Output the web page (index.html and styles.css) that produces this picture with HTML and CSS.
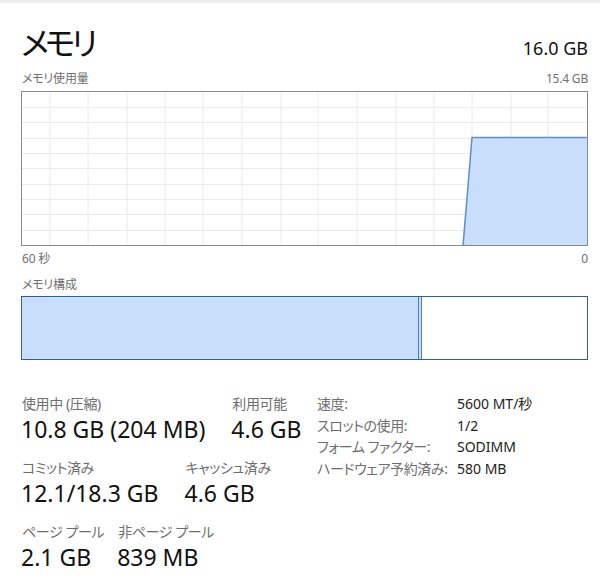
FILE: index.html
```html
<!DOCTYPE html>
<html lang="ja">
<head>
    <meta charset="UTF-8">
    <meta name="viewport" content="width=device-width, initial-scale=1.0">
    <title>メモリ</title>
    <link rel="stylesheet" href="styles.css">
</head>
<body>
    <main class="panel">
        <header class="head">
            <h1 class="title">メモリ</h1>
            <span class="total">16.0 GB</span>
        </header>

        <div class="caption">
            <span>メモリ使用量</span>
            <span>15.4 GB</span>
        </div>
        <div class="chart">
            <svg width="565" height="153" viewBox="0 0 565 153">
                <g class="grid">
                    <line x1="28" y1="0" x2="28" y2="153"/>
                    <line x1="66" y1="0" x2="66" y2="153"/>
                    <line x1="105" y1="0" x2="105" y2="153"/>
                    <line x1="143" y1="0" x2="143" y2="153"/>
                    <line x1="181" y1="0" x2="181" y2="153"/>
                    <line x1="220" y1="0" x2="220" y2="153"/>
                    <line x1="259" y1="0" x2="259" y2="153"/>
                    <line x1="296" y1="0" x2="296" y2="153"/>
                    <line x1="335" y1="0" x2="335" y2="153"/>
                    <line x1="374" y1="0" x2="374" y2="153"/>
                    <line x1="412" y1="0" x2="412" y2="153"/>
                    <line x1="450" y1="0" x2="450" y2="153"/>
                    <line x1="489" y1="0" x2="489" y2="153"/>
                    <line x1="526" y1="0" x2="526" y2="153"/>
                    <line x1="0" y1="15.5" x2="565" y2="15.5"/>
                    <line x1="0" y1="30.5" x2="565" y2="30.5"/>
                    <line x1="0" y1="46.5" x2="565" y2="46.5"/>
                    <line x1="0" y1="61.5" x2="565" y2="61.5"/>
                    <line x1="0" y1="76.5" x2="565" y2="76.5"/>
                    <line x1="0" y1="92.5" x2="565" y2="92.5"/>
                    <line x1="0" y1="107.5" x2="565" y2="107.5"/>
                    <line x1="0" y1="122.5" x2="565" y2="122.5"/>
                    <line x1="0" y1="138.5" x2="565" y2="138.5"/>
                </g>
                <polygon class="usage" points="441,154 450,45.5 566,45.5 566,154"/>
            </svg>
        </div>
        <div class="caption axis">
            <span>60 秒</span>
            <span>0</span>
        </div>

        <div class="caption comp-caption">
            <span>メモリ構成</span>
        </div>
        <div class="comp">
            <div class="comp-used" style="width: 396px"></div>
            <div class="comp-free"></div>
        </div>

        <section class="stats">
            <div class="stats-main">
                <div class="stat-row">
                    <div class="stat">
                        <div class="stat-label">使用中 (圧縮)</div>
                        <div class="stat-value">10.8 GB (204 MB)</div>
                    </div>
                    <div class="stat">
                        <div class="stat-label">利用可能</div>
                        <div class="stat-value">4.6 GB</div>
                    </div>
                </div>
                <div class="stat-row">
                    <div class="stat">
                        <div class="stat-label">コミット済み</div>
                        <div class="stat-value">12.1/18.3 GB</div>
                    </div>
                    <div class="stat">
                        <div class="stat-label">キャッシュ済み</div>
                        <div class="stat-value">4.6 GB</div>
                    </div>
                </div>
                <div class="stat-row">
                    <div class="stat">
                        <div class="stat-label">ページ プール</div>
                        <div class="stat-value">2.1 GB</div>
                    </div>
                    <div class="stat">
                        <div class="stat-label">非ページ プール</div>
                        <div class="stat-value">839 MB</div>
                    </div>
                </div>
            </div>

            <dl class="specs">
                <dt>速度:</dt><dd>5600 MT/秒</dd>
                <dt>スロットの使用:</dt><dd>1/2</dd>
                <dt>フォーム ファクター:</dt><dd>SODIMM</dd>
                <dt>ハードウェア予約済み:</dt><dd>580 MB</dd>
            </dl>
        </section>
    </main>
</body>
</html>
```

FILE: styles.css
```css
body {
    margin: 0;
    background-color: #ffffff;
    color: #000000;
    font-family: "Noto Sans", "Noto Sans CJK JP", sans-serif;
    font-feature-settings: "palt";
}

.panel {
    border-top: 3px solid #eeeeee;
    padding: 0 12px 0 21px;
}

.head {
    display: flex;
    justify-content: space-between;
    align-items: baseline;
    height: 64px;
}

.title {
    margin: 0;
    padding-top: 18px;
    font-size: 32px;
    font-weight: normal;
    line-height: 44px;
    letter-spacing: -4px;
    color: #111111;
}

.total {
    font-size: 18px;
    color: #111111;
}

.caption {
    display: flex;
    justify-content: space-between;
    font-size: 12px;
    line-height: 20px;
    color: #707070;
    padding-left: 1px;
    letter-spacing: -0.2px;
}

.head + .caption {
    margin-top: 2px;
}

.chart {
    margin-top: 2px;
    width: 565px;
    height: 153px;
    border: 1px solid #8a8a8a;
}

.chart svg {
    display: block;
}

.grid line {
    stroke: #eaeaea;
    stroke-width: 1;
}

.usage {
    fill: #c9defa;
    stroke: #5b8ed0;
    stroke-width: 1.5;
}

.axis {
    margin-top: 3px;
}

.comp-caption {
    margin-top: 6px;
}

.comp {
    display: flex;
    margin-top: 1px;
    width: 565px;
    height: 62px;
    border: 1px solid #2f5f9a;
}

.comp-used {
    background-color: #c9defa;
    border-right: 4px double #4f7fb8;
}

.comp-free {
    flex: 1;
}

.stats {
    display: flex;
    margin-top: 34px;
}

.stats-main {
    width: 296px;
    display: flex;
    flex-direction: column;
    gap: 13px;
}

.stat-row {
    display: flex;
    gap: 26px;
}

/* the value sets the column width, the label may run past it */
.stat-label {
    width: 0;
    white-space: nowrap;
    font-size: 14px;
    line-height: 20px;
    color: #6e6e6e;
    padding-left: 1px;
    letter-spacing: -0.4px;
}

.stat-value {
    font-size: 23px;
    line-height: 31px;
    color: #111111;
    white-space: nowrap;
}

.specs {
    display: grid;
    grid-template-columns: 140px auto;
    grid-auto-rows: 21.7px;
    margin: 0;
    font-size: 14px;
    line-height: 20px;
}

.specs dt {
    color: #6e6e6e;
    letter-spacing: -0.4px;
}

.specs dd {
    margin: 0;
    color: #222222;
}
```
